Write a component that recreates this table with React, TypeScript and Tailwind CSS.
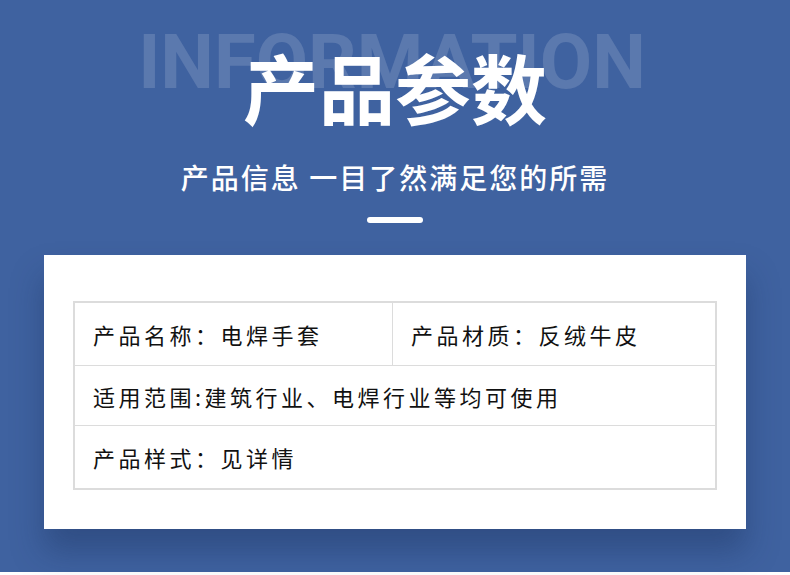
const rows = [
  [
    { label: "产品名称：", value: "电焊手套" },
    { label: "产品材质：", value: "反绒牛皮" },
  ],
];

export default function App() {
  return (
    <div className="flex h-[575px] w-[790px] flex-col overflow-hidden bg-white font-['Noto_Sans_CJK_SC',sans-serif]">
      <div className="relative flex h-[572px] flex-col items-center bg-[#3f62a0]">
        <div className="relative mt-[32px] flex h-[112px] w-full justify-center">
          <div className="absolute top-[-8px] ml-[-6px] font-['Roboto','Noto_Sans',sans-serif] text-[76px] font-bold leading-none tracking-[0px] text-white/15">
            INFORMATION
          </div>
          <h1 className="relative mt-[16px] text-[76px] font-bold leading-none text-white">
            产品参数
          </h1>
        </div>
        <p className="mt-[19px] text-[28px] font-medium leading-none tracking-[2px] text-white">
          产品信息 一目了然满足您的所需
        </p>
        <div className="mt-[26px] h-[6px] w-[56px] rounded-full bg-white" />
        <div className="mt-[32px] w-[702px] bg-white px-[29px] pb-[39px] pt-[46px] shadow-[0_22px_30px_rgba(20,40,80,0.35)]">
          <div className="border-2 border-[#dcdcdc] text-[22px] leading-none tracking-[3.5px] text-[#111]">
            {rows.map((row, i) => (
              <div key={i} className="flex h-[63px] border-b border-[#dcdcdc]">
                {row.map((c, j) => (
                  <div
                    key={j}
                    className={`flex items-center pl-[18px] ${j === 0 ? "w-[318px] border-r border-[#dcdcdc]" : "flex-1 pl-[12px]"}`}
                  >
                    {c.label}
                    {c.value}
                  </div>
                ))}
              </div>
            ))}
            <div className="flex h-[60px] items-center border-b border-[#dcdcdc] pl-[18px]">
              适用范围:建筑行业、电焊行业等均可使用
            </div>
            <div className="flex h-[62px] items-center pl-[18px]">产品样式：见详情</div>
          </div>
        </div>
      </div>
    </div>
  );
}
